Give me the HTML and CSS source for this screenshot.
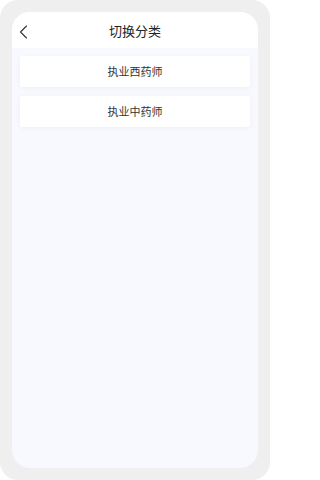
FILE: index.html
```html
<!DOCTYPE html>
<html lang="zh">
<head>
<meta charset="utf-8">
<link rel="stylesheet" href="styles.css">
</head>
<body>
<div class="frame">
  <div class="screen">
    <header class="topbar">
      <span class="back">
        <svg width="10" height="14" viewBox="0 0 10 14"><path d="M8.5 1 L2.5 7 L8.5 13" fill="none" stroke="#333" stroke-width="1.1" stroke-linecap="round" stroke-linejoin="round"/></svg>
      </span>
      <h1 class="title">切换分类</h1>
      <span></span>
    </header>
    <main class="list">
      <div class="item">执业西药师</div>
      <div class="item">执业中药师</div>
    </main>
  </div>
</div>
</body>
</html>
```
FILE: styles.css
```css
html, body {
  margin: 0;
  padding: 0;
  background: #ffffff;
}
body {
  width: 270px;
  height: 480px;
  font-family: "Noto Sans CJK SC", "Noto Sans", sans-serif;
}
.frame {
  box-sizing: border-box;
  width: 270px;
  height: 480px;
  padding: 12px 12px 12px 12px;
  background: #efefef;
  border-radius: 18px;
}
.screen {
  height: 100%;
  background: #f8f9fe;
  border-radius: 18px;
  overflow: hidden;
  display: flex;
  flex-direction: column;
}
.topbar {
  height: 36px;
  background: #ffffff;
  display: grid;
  grid-template-columns: 36px 1fr 36px;
  align-items: center;
}
.back {
  display: flex;
  align-items: center;
  padding-left: 6px;
  padding-top: 3px;
}
.title {
  margin: 0;
  padding-top: 2px;
  text-align: center;
  font-size: 13px;
  font-weight: 400;
  color: #222;
  line-height: 34px;
}
.list {
  padding: 8px 8px;
  display: flex;
  flex-direction: column;
  gap: 9px;
}
.item {
  box-sizing: border-box;
  height: 31px;
  padding-bottom: 1px;
  background: #ffffff;
  border-radius: 2px;
  box-shadow: 0 1px 4px rgba(120, 130, 170, 0.08);
  display: flex;
  align-items: center;
  justify-content: center;
  font-size: 11px;
  color: #333;
}
```
